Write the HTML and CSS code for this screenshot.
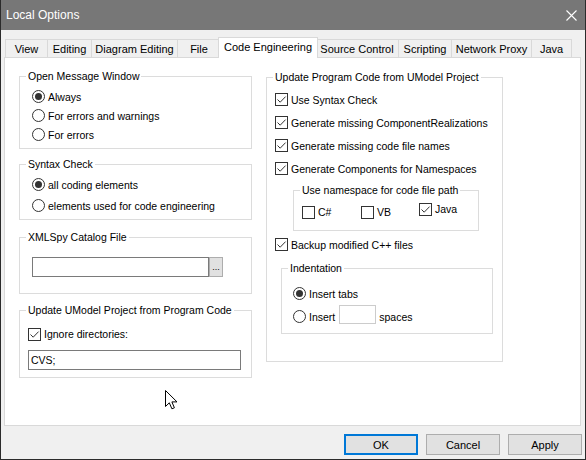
FILE: index.html
```html
<!DOCTYPE html>
<html>
<head>
<meta charset="utf-8">
<title>Local Options</title>
<link rel="stylesheet" href="styles.css">
</head>
<body>
<div class="window">
  <div class="titlebar">
    <span class="title">Local Options</span>
    <svg class="close" width="11" height="11" viewBox="0 0 11 11"><path d="M0.5 0.5 L10.5 10.5 M10.5 0.5 L0.5 10.5" stroke="#ffffff" stroke-width="1.1" fill="none"/></svg>
  </div>

  <div class="tabs">
    <div class="tab t-view">View</div>
    <div class="tab t-edit">Editing</div>
    <div class="tab t-diag">Diagram Editing</div>
    <div class="tab t-file">File</div>
    <div class="tab t-code active">Code Engineering</div>
    <div class="tab t-src">Source Control</div>
    <div class="tab t-script">Scripting</div>
    <div class="tab t-proxy">Network Proxy</div>
    <div class="tab t-java">Java</div>
  </div>

  <div class="panel">
    <div class="col col-left">
      <fieldset class="group g-msg">
        <legend>Open Message Window</legend>
        <div class="opt"><span class="radio on"></span>Always</div>
        <div class="opt"><span class="radio"></span>For errors and warnings</div>
        <div class="opt"><span class="radio"></span>For errors</div>
      </fieldset>

      <fieldset class="group g-syntax">
        <legend>Syntax Check</legend>
        <div class="opt"><span class="radio on"></span>all coding elements</div>
        <div class="opt"><span class="radio"></span>elements used for code engineering</div>
      </fieldset>

      <fieldset class="group g-catalog">
        <legend>XMLSpy Catalog File</legend>
        <div class="fileline">
          <span class="textbox catalog-box"></span>
          <span class="browse">...</span>
        </div>
      </fieldset>

      <fieldset class="group g-update">
        <legend>Update UModel Project from Program Code</legend>
        <div class="opt"><span class="check on"><svg width="11" height="11" viewBox="0 0 11 11"><path d="M1.5 5.5 L4.2 8.2 L9.6 2.6" stroke="#333" stroke-width="1" fill="none"/></svg></span>Ignore directories:</div>
        <div class="textbox cvs-box">CVS;</div>
      </fieldset>
    </div>

    <div class="col col-right">
      <fieldset class="group g-code">
        <legend>Update Program Code from UModel Project</legend>
        <div class="opt"><span class="check on"><svg width="11" height="11" viewBox="0 0 11 11"><path d="M1.5 5.5 L4.2 8.2 L9.6 2.6" stroke="#333" stroke-width="1" fill="none"/></svg></span>Use Syntax Check</div>
        <div class="opt"><span class="check on"><svg width="11" height="11" viewBox="0 0 11 11"><path d="M1.5 5.5 L4.2 8.2 L9.6 2.6" stroke="#333" stroke-width="1" fill="none"/></svg></span>Generate missing ComponentRealizations</div>
        <div class="opt"><span class="check on"><svg width="11" height="11" viewBox="0 0 11 11"><path d="M1.5 5.5 L4.2 8.2 L9.6 2.6" stroke="#333" stroke-width="1" fill="none"/></svg></span>Generate missing code file names</div>
        <div class="opt"><span class="check on"><svg width="11" height="11" viewBox="0 0 11 11"><path d="M1.5 5.5 L4.2 8.2 L9.6 2.6" stroke="#333" stroke-width="1" fill="none"/></svg></span>Generate Components for Namespaces</div>

        <fieldset class="group g-ns">
          <legend>Use namespace for code file path</legend>
          <div class="ns-row">
            <div class="ns-item ns-cs"><span class="check"></span>C#</div>
            <div class="ns-item ns-vb"><span class="check"></span>VB</div>
            <div class="ns-item ns-java"><span class="check on"><svg width="11" height="11" viewBox="0 0 11 11"><path d="M1.5 5.5 L4.2 8.2 L9.6 2.6" stroke="#333" stroke-width="1" fill="none"/></svg></span>Java</div>
          </div>
        </fieldset>

        <div class="opt backup"><span class="check on"><svg width="11" height="11" viewBox="0 0 11 11"><path d="M1.5 5.5 L4.2 8.2 L9.6 2.6" stroke="#333" stroke-width="1" fill="none"/></svg></span>Backup modified C++ files</div>

        <fieldset class="group g-indent">
          <legend>Indentation</legend>
          <div class="opt"><span class="radio on"></span>Insert tabs</div>
          <div class="opt"><span class="radio"></span>Insert<span class="textbox spaces-box"></span><span class="spaces-label">spaces</span></div>
        </fieldset>
      </fieldset>
    </div>
  </div>

  <div class="buttons">
    <div class="btn default">OK</div>
    <div class="btn">Cancel</div>
    <div class="btn">Apply</div>
  </div>

  <svg class="cursor" width="13" height="20" viewBox="0 0 13 20"><path d="M0.5 0.5 V16.5 L4.3 12.8 L6.9 18.8 L9.4 17.8 L6.9 11.9 H12 Z" fill="#ffffff" stroke="#000000" stroke-width="1" stroke-linejoin="miter"/></svg>
</div>
</body>
</html>
```

FILE: styles.css
```css
* {
  box-sizing: border-box;
}

html, body {
  margin: 0;
  padding: 0;
  background: #f0f0f0;
}

body {
  font-family: "Liberation Sans", Arial, sans-serif;
  font-size: 10.5px;
  color: #000;
}

.window {
  position: relative;
  width: 586px;
  height: 460px;
  background: #f0f0f0;
  border: 1px solid #2b2b2b;
  border-top: none;
  display: flex;
  flex-direction: column;
  overflow: hidden;
}

/* title bar */
.titlebar {
  flex: none;
  height: 30px;
  margin: 0 -1px;
  background: #777777;
  color: #ffffff;
  display: flex;
  align-items: center;
  justify-content: space-between;
  padding: 0 9px 0 6px;
  font-size: 12px;
}

.close {
  display: block;
}

/* tabs */
.tabs {
  flex: none;
  height: 20px;
  margin-top: 7px;
  padding-left: 4px;
  display: flex;
  align-items: flex-end;
  font-size: 11px;
}

.tab {
  flex: none;
  height: 18px;
  margin-left: -1px;
  border: 1px solid #d9d9d9;
  border-bottom: none;
  background: #f0f0f0;
  display: flex;
  align-items: center;
  justify-content: center;
  padding-top: 1px;
  white-space: nowrap;
}

.tab:first-child {
  margin-left: 0;
}

.t-view { width: 43px; }
.t-edit { width: 45px; }
.t-diag { width: 87px; }
.t-file { width: 44px; }
.t-src { width: 84px; }
.t-script { width: 54px; }
.t-proxy { width: 81px; }
.t-java { width: 41px; }

.tab.active {
  position: relative;
  z-index: 2;
  width: 100px;
  height: 21px;
  margin-left: -3px;
  margin-right: -2px;
  margin-bottom: -1px;
  background: #ffffff;
  padding-top: 0;
  padding-bottom: 2px;
}

/* panel */
.panel {
  flex: none;
  width: 577px;
  height: 369px;
  margin-left: 3px;
  background: #ffffff;
  border: 1px solid #d9d9d9;
  padding: 11px 0 0 14px;
  display: flex;
  gap: 14px;
}

.col {
  display: flex;
  flex-direction: column;
}

.col-left {
  width: 233px;
}

.col-right {
  width: 237px;
}

/* group boxes */
.group {
  margin: 0;
  padding: 0;
  border: 1px solid #dcdcdc;
  min-width: 0;
}

.group legend {
  padding: 0 2px;
  margin-left: 6px;
  line-height: 14px;
  height: 14px;
  white-space: nowrap;
}

.opt {
  display: flex;
  align-items: center;
  white-space: nowrap;
}

.radio {
  flex: none;
  width: 13px;
  height: 13px;
  border: 1px solid #333333;
  border-radius: 50%;
  margin-right: 3px;
  display: flex;
  align-items: center;
  justify-content: center;
  background: #ffffff;
}

.radio.on::after {
  content: "";
  width: 7px;
  height: 7px;
  border-radius: 50%;
  background: #333333;
}

.check {
  flex: none;
  width: 13px;
  height: 13px;
  border: 1px solid #333333;
  margin-right: 3px;
  background: #ffffff;
  display: flex;
  align-items: center;
  justify-content: center;
}

.check svg {
  display: block;
}

.textbox {
  display: block;
  background: #ffffff;
  border: 1px solid #7a7a7a;
}

/* left column groups */
.g-msg {
  padding: 4px 0 4px 0;
}

.g-msg .opt {
  height: 19px;
  margin-left: 12px;
}

.g-syntax {
  margin-top: 8px;
  padding: 3px 0 3px 0;
}

.g-syntax .opt {
  height: 21px;
  margin-left: 12px;
}

.g-catalog {
  margin-top: 10px;
  padding: 13px 0 16px 0;
}

.fileline {
  display: flex;
  margin-left: 12px;
  height: 20px;
}

.catalog-box {
  width: 177px;
  height: 20px;
}

.browse {
  width: 14px;
  height: 20px;
  border: 1px solid #adadad;
  background: #e1e1e1;
  display: flex;
  align-items: flex-end;
  justify-content: center;
  padding-bottom: 4px;
  font-size: 9px;
  line-height: 9px;
}

.g-update {
  margin-top: 9px;
  padding: 8px 0 7px 0;
}

.g-update .opt {
  height: 18px;
  margin-left: 8px;
}

.cvs-box {
  width: 213px;
  height: 20px;
  margin: 7px 0 0 8px;
  padding: 0 0 0 2px;
  line-height: 18px;
}

/* right column */
.g-code {
  margin-top: 1px;
  padding: 4px 0 27px 0;
}

.g-code > .opt {
  height: 23px;
  margin-left: 8px;
}

.g-ns {
  width: 186px;
  margin: 3px 0 0 26px;
  padding: 3px 0 9px 0;
}

.ns-row {
  display: flex;
  align-items: flex-start;
  margin-left: 8px;
}

.ns-item {
  display: flex;
  align-items: center;
  height: 18px;
}

.ns-cs {
  width: 59px;
  margin-top: 3px;
}

.ns-vb {
  width: 58px;
  margin-top: 3px;
}

.g-code > .backup {
  margin-top: 2px;
}

.g-indent {
  width: 212px;
  margin: 5px 0 0 14px;
  padding: 7px 0 5px 0;
}

.g-indent .opt {
  height: 23px;
  margin-left: 11px;
}

.spaces-box {
  width: 37px;
  height: 19px;
  margin: -5px 0 0 4px;
  border-color: #cccccc;
}

.spaces-label {
  margin-left: 3px;
}

/* buttons */
.buttons {
  flex: none;
  display: flex;
  justify-content: flex-end;
  gap: 8px;
  margin: 8px 3px 0 0;
}

.btn {
  width: 74px;
  height: 21px;
  background: #e1e1e1;
  border: 1px solid #adadad;
  display: flex;
  align-items: center;
  justify-content: center;
  font-size: 11px;
}

.btn.default {
  border: 2px solid #0078d7;
}

/* mouse pointer over the dialog */
.cursor {
  position: absolute;
  left: 164px;
  top: 390px;
  display: block;
}
```
